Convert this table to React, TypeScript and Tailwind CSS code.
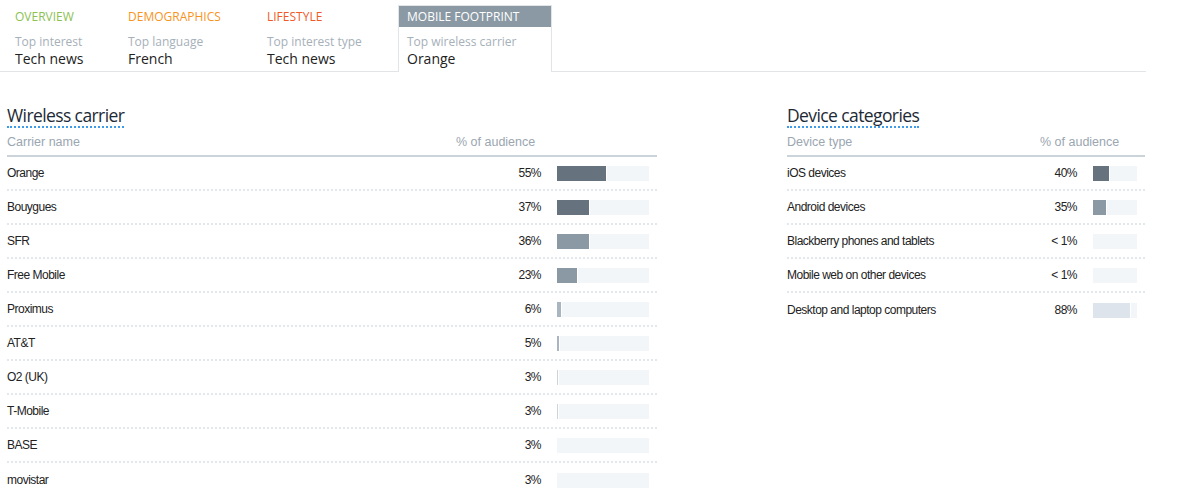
import React from "react";

type Row = { name: string; pct: string; w: number; color: string };

const carriers: Row[] = [
  { name: "Orange", pct: "55%", w: 49, color: "bg-[#66737e]" },
  { name: "Bouygues", pct: "37%", w: 32, color: "bg-[#66737e]" },
  { name: "SFR", pct: "36%", w: 32, color: "bg-[#8a99a4]" },
  { name: "Free Mobile", pct: "23%", w: 20, color: "bg-[#8a99a4]" },
  { name: "Proximus", pct: "6%", w: 4, color: "bg-[#a9b6c0]" },
  { name: "AT&T", pct: "5%", w: 2, color: "bg-[#a9b6c0]" },
  { name: "O2 (UK)", pct: "3%", w: 1, color: "bg-[#cdd5db]" },
  { name: "T-Mobile", pct: "3%", w: 1, color: "bg-[#cdd5db]" },
  { name: "BASE", pct: "3%", w: 0, color: "bg-[#cdd5db]" },
  { name: "movistar", pct: "3%", w: 0, color: "bg-[#cdd5db]" },
];

const devices: Row[] = [
  { name: "iOS devices", pct: "40%", w: 16, color: "bg-[#66737e]" },
  { name: "Android devices", pct: "35%", w: 13, color: "bg-[#8a99a4]" },
  { name: "Blackberry phones and tablets", pct: "< 1%", w: 0, color: "bg-[#cdd5db]" },
  { name: "Mobile web on other devices", pct: "< 1%", w: 0, color: "bg-[#cdd5db]" },
  { name: "Desktop and laptop computers", pct: "88%", w: 37, color: "bg-[#dde4eb]" },
];

const titleFont = { fontFamily: '"Open Sans", "Noto Sans", sans-serif' };
const tableFont = { fontFamily: '"Liberation Sans", Arial, sans-serif' };

function Tab({
  label,
  labelColor,
  sub,
  value,
  width,
  active,
}: {
  label: string;
  labelColor: string;
  sub: string;
  value: string;
  width: string;
  active?: boolean;
}) {
  if (active) {
    return (
      <div
        className={`${width} -mb-px mt-[5px] flex flex-col border border-b-0 border-[#e1e5e8] bg-white`}
      >
        <div className="flex h-[21px] items-center bg-[#8a99a4] pl-2 text-[12px] text-white">
          {label}
        </div>
        <div className="pl-2 pt-[7px]">
          <div className="text-[12px] leading-[16px] text-[#a6b0b9]">{sub}</div>
          <div className="text-[14px] leading-[18px] text-[#222]">{value}</div>
        </div>
      </div>
    );
  }
  return (
    <div className={`${width} flex flex-col pl-2 pt-[6px]`}>
      <div className={`flex h-[21px] items-center text-[12px] ${labelColor}`}>{label}</div>
      <div className="pt-[7px]">
        <div className="text-[12px] leading-[16px] text-[#a6b0b9]">{sub}</div>
        <div className="text-[14px] leading-[18px] text-[#222]">{value}</div>
      </div>
    </div>
  );
}

function Table({
  title,
  col1,
  rows,
  pctWidth,
  headWidth,
  barWidth,
}: {
  title: string;
  col1: string;
  rows: Row[];
  pctWidth: string;
  headWidth: string;
  barWidth: string;
}) {
  return (
    <div className="flex flex-col">
      <div className="flex">
        <div
          className="border-b-2 border-dotted border-[#3d9be9] pt-[1px] text-[17.5px] leading-[21px] tracking-[-0.6px] text-[#1d2a36]"
          style={titleFont}
        >
          {title}
        </div>
      </div>
      <div
        className="flex h-[29px] items-center border-b-2 border-[#cbd4da] pt-[2px] text-[12.5px] text-[#9aa6b1]"
        style={tableFont}
      >
        <div className="flex-1">{col1}</div>
        <div className={headWidth}>% of audience</div>
      </div>
      {rows.map((r, i) => (
        <div
          key={i}
          className={`flex h-[34px] items-center text-[12px] tracking-[-0.5px] text-[#222] ${
            i < rows.length - 1 ? "border-b-2 border-dotted border-[#e3e8ec]" : ""
          }`}
          style={tableFont}
        >
          <div className="flex-1">{r.name}</div>
          <div className={`${pctWidth} text-right`}>{r.pct}</div>
          <div className={`ml-4 mr-2 flex h-[15px] ${barWidth} bg-[#f2f6f9]`}>
            {r.w > 0 && (
              <div className={`h-full ${r.color} border-r border-white`} style={{ width: r.w + 1 }} />
            )}
          </div>
        </div>
      ))}
    </div>
  );
}

export default function App() {
  return (
    <div className="h-[503px] w-[1177px] overflow-hidden bg-white" style={titleFont}>
      <div className="flex h-[72px] w-[1146px] border-b border-[#e1e5e8] pl-[7px]">
        <Tab
          label="OVERVIEW"
          labelColor="text-[#8cc152]"
          sub="Top interest"
          value="Tech news"
          width="w-[113px]"
        />
        <Tab
          label="DEMOGRAPHICS"
          labelColor="text-[#f7941d]"
          sub="Top language"
          value="French"
          width="w-[139px]"
        />
        <Tab
          label="LIFESTYLE"
          labelColor="text-[#f05a28]"
          sub="Top interest type"
          value="Tech news"
          width="w-[139px]"
        />
        <Tab
          label="MOBILE FOOTPRINT"
          labelColor=""
          sub="Top wireless carrier"
          value="Orange"
          width="w-[154px]"
          active
        />
      </div>
      <div className="flex pl-[7px] pt-[32px]">
        <div className="w-[650px]">
          <Table
            title="Wireless carrier"
            col1="Carrier name"
            rows={carriers}
            pctWidth="w-[85px]"
            headWidth="w-[201px]"
            barWidth="w-[92px]"
          />
        </div>
        <div className="ml-[130px] w-[358px]">
          <Table
            title="Device categories"
            col1="Device type"
            rows={devices}
            pctWidth="w-[37px]"
            headWidth="w-[105px]"
            barWidth="w-[44px]"
          />
        </div>
      </div>
    </div>
  );
}
